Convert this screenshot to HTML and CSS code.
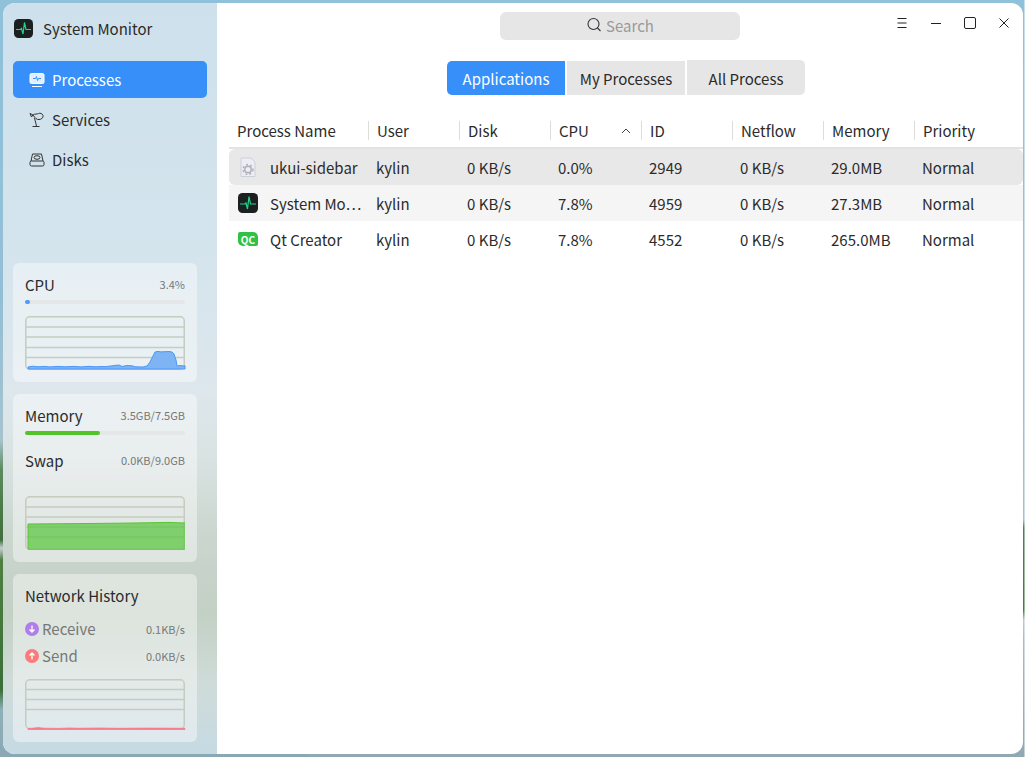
FILE: index.html
```html
<!DOCTYPE html>
<html lang="en">
<head>
  <meta charset="UTF-8" />
  <meta name="viewport" content="width=device-width, initial-scale=1.0" />
  <title>System Monitor</title>
  <link rel="stylesheet" href="styles.css">
</head>
<body>
  <div class="window">
    <aside class="sidebar">
      <div class="brand">
        <svg class="brand-icon" width="19" height="19" viewBox="0 0 19 19"><rect width="19" height="19" rx="4.500" fill="#1c1f20"/><path d="M2 10.500h4.500l1-1L9 15l1.500-11.500L12 10.500h5" fill="none" stroke="#1fd58c" stroke-width="1.200"/></svg>
        <span>System Monitor</span>
      </div>
      <nav class="nav">
        <div class="nav-item active">
          <svg width="16" height="16" viewBox="0 0 16 16" fill="none" stroke="#fff"><rect x="1" y="1.500" width="14" height="10" rx="1.500" fill="rgba(255, 255, 255, 0.85)"/><path d="M3 14.500h10"/><path d="M4 6.500h2.500l1-2 1 4 1-2H12" stroke="#3790fa"/></svg>
          <span>Processes</span>
        </div>
        <div class="nav-item">
          <svg width="16" height="16" viewBox="0 0 16 16" fill="none" stroke="#333"><path d="M4 3C6 1.500 8 2.500 9.500 1.500 11 .8 13.500 1.500 14 3.500 14.500 6 12 7.500 10 7.500 8 8 6 6 4 3z"/><path d="M1 1.500l3 1.500-1.500 2z"/><path d="M5.500 6l2 8M3.500 14.500h7"/></svg>
          <span>Services</span>
        </div>
        <div class="nav-item">
          <svg width="16" height="16" viewBox="0 0 16 16" fill="none" stroke="#333"><path d="M2 9l1.500-7h9L14 9"/><rect x="1" y="9" width="14" height="5" rx="1.500"/><ellipse cx="8" cy="5.500" rx="3" ry="1.800"/></svg>
          <span>Disks</span>
        </div>
      </nav>

      <section class="card cpu-card">
        <div class="card-row"><span class="card-title">CPU</span><span class="card-value">3.4%</span></div>
        <div class="bar"><div class="bar-fill blue" style="width: 3%"></div></div>
        <svg class="graph cpu-graph" width="160" height="55" viewBox="0 0 160 55">
          <path class="grid-line" d="M0 11h159M0 21h159M0 31.500h159M0 41.500h159"/>
          <rect class="frame" x="0.750" y="0.750" width="158.500" height="52.500" rx="4"/>
          <path d="M3 53V51l5-.8 5 .6 6-.4 6 .5 8-.5 7 .4 9-.4 7 .5 8-.6 6 .5 7-.3 3 .2 4-.5L94 49l3 1.500 5-1 5 .3 3 1 8 .2L122 50 125 46 128 40 130 36l3-.6 3 .5 8-.4 3 .5L149 38 151 44 152 50l4-.5 2 .5 2-.3V53z" fill="#7eb4f3" stroke="#4a97f7"/>
        </svg>
      </section>

      <section class="card">
        <div class="card-row"><span class="card-title">Memory</span><span class="card-value">3.5GB/7.5GB</span></div>
        <div class="bar"><div class="bar-fill green" style="width: 47%"></div></div>
        <div class="card-row swap-row"><span class="card-title">Swap</span><span class="card-value">0.0KB/9.0GB</span></div>
        <div class="bar light"></div>
        <svg class="graph memory-graph" width="160" height="55" viewBox="0 0 160 55">
          <path class="grid-line" d="M0 11h159M0 21h159M0 31h159M0 41h159"/>
          <rect class="frame" x="0.750" y="0.750" width="158.500" height="52.500" rx="4"/>
          <path d="M3 53V28l50-.4 40-.4 30-.4 20-.4L160 27V53z" fill="rgba(87, 196, 60, 0.7)"/>
          <path d="M3 53V28l50-.4 40-.4 30-.4 20-.4L160 27" fill="none" stroke="#58c52f"/>
          <path d="M3 53.500h157" stroke="#ee9040" fill="none"/>
        </svg>
      </section>

      <section class="card">
        <div class="card-row"><span class="card-title">Network History</span></div>
        <div class="card-row net-row">
          <span class="net-label">
            <svg width="14" height="14" viewBox="0 0 14 14"><circle cx="7" cy="7" r="7" fill="#b07ee8"/><path d="M7 3.500v6M4.500 7.500L7 10l2.500-2.500" fill="none" stroke="#fff" stroke-width="1.300"/></svg>
            Receive
          </span>
          <span class="card-value">0.1KB/s</span>
        </div>
        <div class="card-row net-row">
          <span class="net-label">
            <svg width="14" height="14" viewBox="0 0 14 14"><circle cx="7" cy="7" r="7" fill="#fb7a7a"/><path d="M7 10.500v-6M4.500 6.500L7 4l2.500 2.500" fill="none" stroke="#fff" stroke-width="1.300"/></svg>
            Send
          </span>
          <span class="card-value">0.0KB/s</span>
        </div>
        <svg class="graph net-graph" width="160" height="52" viewBox="0 0 160 52">
          <path class="grid-line" d="M0 10.500h159M0 20.500h159M0 30.500h159"/>
          <rect class="frame" x="0.750" y="0.750" width="158.500" height="49" rx="4"/>
          <path d="M3 50.500V49.500l5-.3 5-.6 6 .6 15 .2 10-.4 10 .3 20-.3 20 .3 30-.2 36 .2V50.500z" fill="#fb7a88" stroke="#fb7a88" stroke-width="0.800"/>
        </svg>
      </section>
    </aside>

    <main class="main">
      <header class="topbar">
        <div class="search">
          <svg width="16" height="16" viewBox="0 0 16 16" fill="none" stroke="#333" stroke-width="1.100"><circle cx="7.500" cy="7" r="5.500"/><path d="M11.500 11l3 3"/></svg>
          <span>Search</span>
        </div>
        <div class="window-controls">
          <div class="control"><svg width="12" height="12" viewBox="0 0 12 12" stroke="#222" fill="none"><path d="M1.500 1.500h9M1.500 6h9M1.500 10.500h9"/></svg></div>
          <div class="control"><svg width="12" height="12" viewBox="0 0 12 12" stroke="#222" fill="none"><path d="M1 6.500h10"/></svg></div>
          <div class="control"><svg width="12" height="12" viewBox="0 0 12 12" stroke="#222" fill="none"><rect x="0.500" y="0.500" width="11" height="11" rx="1.500"/></svg></div>
          <div class="control"><svg width="12" height="12" viewBox="0 0 12 12" stroke="#222" fill="none"><path d="M1.500 1.500l9 9M10.500 1.500l-9 9"/></svg></div>
        </div>
      </header>

      <div class="tabs">
        <div class="tab active">Applications</div>
        <div class="tab">My Processes</div>
        <div class="tab">All Process</div>
      </div>

      <div class="table">
        <div class="row head">
          <div class="cell">Process Name</div>
          <div class="cell">User</div>
          <div class="cell">Disk</div>
          <div class="cell sort">CPU
            <svg width="10" height="6" viewBox="0 0 10 6" fill="none" stroke="#444"><path d="M1 5l4-4 4 4"/></svg>
          </div>
          <div class="cell">ID</div>
          <div class="cell">Netflow</div>
          <div class="cell">Memory</div>
          <div class="cell">Priority</div>
        </div>

        <div class="row selected">
          <div class="cell name">
            <svg width="20" height="20" viewBox="0 0 20 20"><path d="M3 1h10l4 4v14.500H3z" fill="#eceef3" stroke="#ccd0da"/><circle cx="10" cy="12.500" r="3.200" fill="none" stroke="#a9aeb8" stroke-width="1.400"/><circle cx="10" cy="12.500" r="5" fill="none" stroke="#a9aeb8" stroke-width="1.300" stroke-dasharray="2 2.200"/></svg>
            <span>ukui-sidebar</span>
          </div>
          <div class="cell">kylin</div><div class="cell">0 KB/s</div><div class="cell">0.0%</div><div class="cell">2949</div><div class="cell">0 KB/s</div><div class="cell">29.0MB</div><div class="cell">Normal</div>
        </div>

        <div class="row alt">
          <div class="cell name">
            <svg width="20" height="20" viewBox="0 0 20 20"><rect width="20" height="20" rx="4.500" fill="#1c1f20"/><path d="M2 11h5l1-1 1.500 6L11 3.500 12.500 11H18" fill="none" stroke="#1fd58c" stroke-width="1.200"/></svg>
            <span>System Mo…</span>
          </div>
          <div class="cell">kylin</div><div class="cell">0 KB/s</div><div class="cell">7.8%</div><div class="cell">4959</div><div class="cell">0 KB/s</div><div class="cell">27.3MB</div><div class="cell">Normal</div>
        </div>

        <div class="row">
          <div class="cell name">
            <span class="qc-icon">QC</span>
            <span>Qt Creator</span>
          </div>
          <div class="cell">kylin</div><div class="cell">0 KB/s</div><div class="cell">7.8%</div><div class="cell">4552</div><div class="cell">0 KB/s</div><div class="cell">265.0MB</div><div class="cell">Normal</div>
        </div>
      </div>
    </main>
  </div>
</body>
</html>
```

FILE: styles.css
```css
html, body {
  height: 757px;
}
body {
  margin: 0;
  overflow: hidden;
  font-family: "Noto Sans CJK SC", "Noto Sans", sans-serif;
  color: #2b2b2b;
  background:
    linear-gradient(#8fc1da 0, #93bfd5 300px, #a6c3cd 440px, #5c8a5c 470px, #3f6f3c 540px, #c9cdd4 548px, #4d8040 560px, #3a7038 690px, #8fb0b8 710px, #8aa8b4 757px) left / 30% 100% no-repeat,
    linear-gradient(#8fc1da 0, #a3c0cc 520px, #4f7f5a 528px, #3f8040 610px, #c3c8cf 620px, #a6bcc8 640px, #8fa8b2 757px) right / 70.100% 100% no-repeat;
}
.window {
  display: flex;
  height: 751px;
  margin: 3px 2px 3px 3px;
  border-radius: 12px;
  overflow: hidden;
  background: #fff;
}

/* left side */
.sidebar {
  width: 214px;
  flex-shrink: 0;
  box-sizing: border-box;
  padding: 0 20px 12px 10px;
  display: flex;
  flex-direction: column;
  background: linear-gradient(#cde0ec 0, #d4e4ed 240px, #dde7ec 390px, #dae3e3 450px, #cbd6cf 530px, #c3d0c4 610px, #cfdbd8 680px, #c6dae4 751px);
}
.brand {
  height: 50px;
  display: flex;
  align-items: center;
  gap: 10px;
  font-size: 15px;
  margin-left: 1px;
}
.nav {
  margin-top: 8px;
  margin-right: -10px;
  display: flex;
  flex-direction: column;
  gap: 3px;
}
.nav-item {
  height: 37px;
  display: flex;
  align-items: center;
  gap: 7px;
  padding-left: 16px;
  border-radius: 5px;
  font-size: 15px;
}
.nav-item.active {
  background: #3790fa;
  color: #fff;
}
.card {
  margin-top: 12px;
  height: 168px;
  box-sizing: border-box;
  padding: 10px 12px 0;
  border-radius: 6px;
  background: rgba(255, 255, 255, 0.42);
}
.cpu-card {
  margin-top: auto;
  height: 119px;
}
.card-row {
  display: flex;
  justify-content: space-between;
  align-items: center;
  height: 22px;
}
.card-title {
  font-size: 15px;
}
.card-value {
  font-size: 11px;
  color: #777;
}
.bar {
  height: 4px;
  margin-top: 5px;
  border-radius: 2px;
  background: #e4e6e8;
}
.bar.light {
  background: #e8eaeb;
}
.bar-fill {
  height: 100%;
  border-radius: 2px;
}
.bar-fill.blue { background: #4f9bf8; }
.bar-fill.green { background: #52c429; }
.swap-row {
  margin-top: 14px;
}
.graph {
  display: block;
  overflow: visible;
}
.cpu-graph { margin-top: 12px; }
.memory-graph { margin-top: 16px; }
.net-graph { margin-top: 10px; }
.grid-line {
  stroke: #c6ccbf;
  stroke-width: 1.500;
  fill: none;
}
.frame {
  stroke: #c6ccbf;
  stroke-width: 1.500;
  fill: none;
}
.net-row {
  height: 27px;
}
.net-row:nth-child(2) {
  margin-top: 9px;
}
.net-label {
  display: flex;
  align-items: center;
  gap: 3px;
  font-size: 15px;
  color: #777;
}

/* right side */
.main {
  flex: 1;
  min-width: 0;
}
.topbar {
  display: flex;
  justify-content: space-between;
  padding: 9px 2px 0 283px;
}
.search {
  width: 240px;
  height: 28px;
  box-sizing: border-box;
  padding-bottom: 2px;
  display: flex;
  align-items: center;
  justify-content: center;
  gap: 4px;
  border-radius: 6px;
  background: #e6e6e6;
  font-size: 15px;
  color: #999;
}
.window-controls {
  display: flex;
  height: 22px;
}
.control {
  width: 34px;
  display: flex;
  align-items: center;
  justify-content: center;
}
.tabs {
  display: flex;
  align-items: flex-end;
  gap: 2px;
  margin: 20px 0 0 230px;
}
.tab {
  width: 118px;
  height: 34px;
  display: flex;
  align-items: center;
  justify-content: center;
  background: #e6e6e6;
  font-size: 15px;
}
.tab.active {
  background: #3790fa;
  color: #fff;
  border-radius: 5px 0 0 5px;
}
.tab:last-child {
  height: 35px;
  padding-top: 1px;
  box-sizing: border-box;
  border-radius: 0 5px 5px 0;
}
.table {
  margin: 18px 0 0 12px;
}
.row {
  display: grid;
  grid-template-columns: 139px repeat(6, 91px) 1fr;
  height: 36px;
  align-items: center;
  font-size: 15px;
}
.row .cell {
  padding-left: 8px;
  white-space: nowrap;
}
.row.head {
  height: 36px;
  padding-top: 1px;
  border-bottom: 2px solid #e3e3e3;
  box-sizing: border-box;
}
.head .cell {
  height: 19px;
  line-height: 19px;
  border-left: 1px solid #dcdcdc;
}
.head .cell:first-child {
  border-left: none;
}
.head .sort {
  display: flex;
  align-items: center;
  justify-content: space-between;
  padding-right: 10px;
}
.row.selected {
  background: #e8e8e8;
  border-radius: 6px;
}
.row.alt {
  background: #f5f5f5;
}
.row .cell.name {
  display: flex;
  align-items: center;
  gap: 12px;
  padding-left: 9px;
}
.qc-icon {
  width: 20px;
  height: 14px;
  flex-shrink: 0;
  display: flex;
  align-items: center;
  justify-content: center;
  background: #2fc246;
  border-radius: 2px 5px 2px 5px;
  color: #fff;
  font-size: 10px;
  font-weight: 700;
}
```
